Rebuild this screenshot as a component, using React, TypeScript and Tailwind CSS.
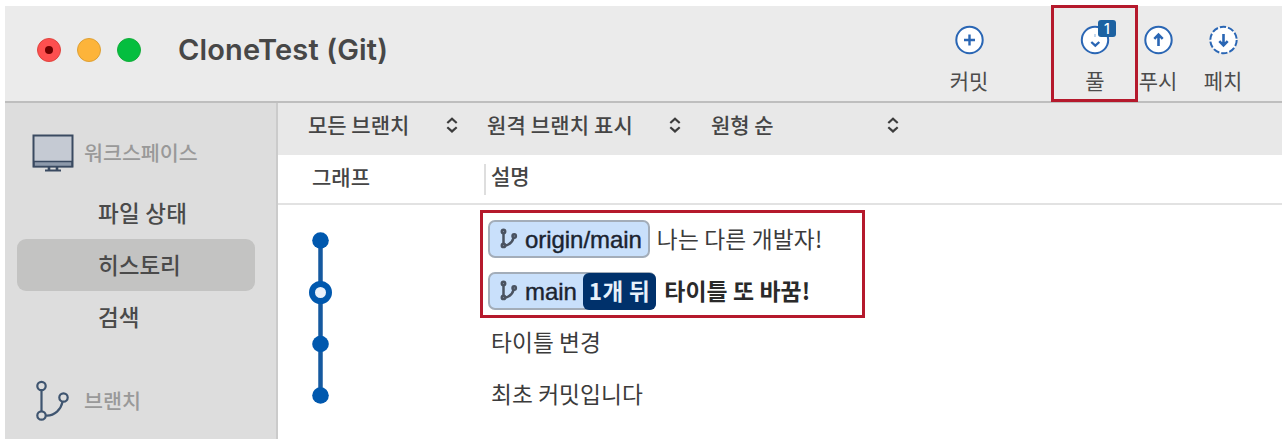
import type { ReactNode } from "react";

const KR = "font-['Noto_Sans_CJK_KR','Noto_Sans_CJK_SC',sans-serif]";

function BranchGlyph({ className }: { className: string }) {
  return (
    <svg className={className} viewBox="0 0 34 42" fill="none" stroke="currentColor">
      <path d="M6.5 10.5v21M11 35.5C20 36 26 29 27.5 22" />
      <circle cx="6.5" cy="6" r="4.2" />
      <circle cx="6.5" cy="35.5" r="4.2" />
      <circle cx="28.5" cy="17.5" r="4.2" />
    </svg>
  );
}

function TagBranch() {
  return (
    <svg
      className="h-[21px] w-[19px] shrink-0 -translate-y-px text-[#4a5361]"
      viewBox="0 0 19 21"
      fill="none"
      stroke="currentColor"
      strokeWidth="2.5"
    >
      <path d="M4.5 4.5v12M5 18C9.5 17.2 13.5 14 14.7 9.5" />
      <circle cx="4.5" cy="3.4" r="1.7" />
      <circle cx="4.5" cy="17.4" r="1.7" />
      <circle cx="15.2" cy="8" r="1.7" />
    </svg>
  );
}

function Sorter() {
  return (
    <svg className="mt-[2px] h-4 w-3 shrink-0" viewBox="0 0 12 16" fill="none" stroke="#3c3c3c" strokeWidth="2.2">
      <path d="M1.3 6 6 1.8l4.7 4.2M1.3 10.2 6 14.4l4.7-4.2" />
    </svg>
  );
}

function Monitor() {
  return (
    <svg className="h-[38px] w-[42px] shrink-0" viewBox="0 0 42 38" fill="none" stroke="#3a4a61" strokeWidth="2">
      <rect x="1.5" y="1.5" width="39" height="31" fill="#c5cad3" />
      <path d="M2 27.5h38v5H2z" fill="#8e9aab" strokeWidth="1.6" />
      <path d="M17 33v3.5M25 33v3.5" strokeWidth="2.6" />
      <path d="M13 36.5h16" />
    </svg>
  );
}

function Tool({ label, className, children }: { label: string; className: string; children: ReactNode }) {
  return (
    <div className={`flex shrink-0 flex-col items-center ${className}`}>
      <svg className="h-8 w-8" viewBox="0 0 32 32" fill="none" stroke="#2a66b4" strokeWidth="2">
        {children}
      </svg>
      <span className="mt-[10px] text-[21px] leading-[28px] whitespace-nowrap text-[#4c4c4c]">{label}</span>
    </div>
  );
}

function Header() {
  return (
    <header className="flex h-[97px] shrink-0 border-b-2 border-[#bebebe] bg-[#ebebeb]">
      <div className="mt-[32px] ml-[32px] flex h-6 items-center gap-4">
        <span className="flex size-6 items-center justify-center rounded-full border border-[#e0443e] bg-[#fd4f4f]">
          <span className="size-2 rounded-full bg-[#6d0000]" />
        </span>
        <span className="size-6 rounded-full border border-[#dea034] bg-[#fdb43a]" />
        <span className="size-6 rounded-full border border-[#14ad3a] bg-[#04be3f]" />
      </div>
      <h1 className="mt-[24px] ml-[37px] grow font-['Inter',sans-serif] text-[29px] leading-[40px] font-semibold tracking-[0.15px] text-[#474747]">
        CloneTest (Git)
      </h1>
      <div className="mr-[24px] flex pt-[18px]">
        <Tool label="커밋" className="w-[66px]">
          <circle cx="16.5" cy="16" r="13.2" fill="#fff" />
          <path d="M16.5 10.5v11M11 16h11" strokeWidth="2.4" />
        </Tool>
        <div className="relative ml-[60px]">
          <Tool label="풀" className="w-[66px]">
            <circle cx="16" cy="16" r="13.2" fill="#fff" />
            <path d="m12.3 18 4 3.7 4-3.7" strokeWidth="2.3" />
            <path d="M16 10v3" stroke="#c4d8ee" />
          </Tool>
          <span className="absolute top-[-4px] left-[36px] flex h-[17px] w-[18px] items-center justify-center rounded-[3px] bg-[#1d62a2] font-['Inter',sans-serif] text-[14px] leading-none font-medium text-white">
            1
          </span>
          <div className="absolute top-[-19px] left-[-11px] h-[97px] w-[87px] border-[3px] border-[#b5192c]" />
        </div>
        <Tool label="푸시" className="w-[60px]">
          <circle cx="16.5" cy="16" r="13.2" fill="#fff" />
          <path d="M16.5 22V11M12.3 14.8l4.2-4.2 4.2 4.2" strokeWidth="2.6" />
        </Tool>
        <Tool label="페치" className="w-[70px]">
          <circle cx="16.5" cy="16" r="13.2" fill="#fff" strokeDasharray="6.3 2" />
          <path d="M16.5 10v11M12.3 17.2l4.2 4.2 4.2-4.2" strokeWidth="2.6" />
        </Tool>
      </div>
    </header>
  );
}

function Sidebar() {
  return (
    <nav className="w-[273px] shrink-0 border-r-2 border-[#cbcbcb] bg-[#dddddd] text-[22.5px] leading-[50px] font-medium text-[#4a4a4a]">
      <div className="flex h-[84px] pt-[31px] pl-[27px]">
        <Monitor />
        <span className="ml-[10px] text-[20.6px] leading-[36px] text-[#999]">워크스페이스</span>
      </div>
      <div className="h-[52px] pl-[93px] tracking-[0.3px]">파일 상태</div>
      <div className="mx-3 mr-[21px] h-[52px] rounded-[9px] bg-[#c3c3c2] pl-[81px]">히스토리</div>
      <div className="h-[52px] pl-[93px]">검색</div>
      <div className="flex pt-[37px] pl-[30px]">
        <BranchGlyph className="h-[42px] w-[34px] shrink-0 stroke-[2.2] text-[#3f5570]" />
        <span className="ml-[15px] text-[20.6px] leading-[40px] text-[#999]">브랜치</span>
      </div>
    </nav>
  );
}

function Graph() {
  return (
    <svg className="h-[218px] w-[203px] shrink-0" viewBox="0 0 203 218" fill="#0058ae">
      <path d="M42.5 36v155" stroke="#15599f" strokeWidth="4.5" />
      <circle cx="42.5" cy="35.5" r="8.3" />
      <circle cx="42.5" cy="139" r="8.3" />
      <circle cx="42.5" cy="190.5" r="8.3" />
      <circle cx="42.5" cy="87.5" r="8.5" fill="#e9f1fb" stroke="#0058ae" strokeWidth="6" />
    </svg>
  );
}

function Tag({ name, badge }: { name: string; badge?: string }) {
  return (
    <span className="flex h-[38px] shrink-0 items-center rounded-[7px] border-2 border-[#a3adb9] bg-[#c9e0fb] pl-[9px] text-[#1b2430]">
      <TagBranch />
      <span className="ml-[7px] pt-[2px] font-['Liberation_Sans',sans-serif] text-[24px] leading-[36px] tracking-[-0.05px] [-webkit-text-stroke:0.4px_#1b2430]">
        {name}
      </span>
      {badge ? (
        <span className="-my-px -mr-[2px] ml-[6px] h-[37px] rounded-[6px] bg-[#00316b] px-[6px] text-[22.5px] leading-[35px] font-bold tracking-[0.4px] whitespace-nowrap text-[#e8f1fb]">
          {badge}
        </span>
      ) : (
        <span className="w-[6px]" />
      )}
    </span>
  );
}

function History() {
  return (
    <div className="flex">
      <Graph />
      <div className="w-[400px] text-[22.7px] leading-[50px] tracking-[0.1px] whitespace-nowrap text-[#3b3b3b]">
        <div className="mt-[5px] -ml-px h-[108px] w-[385px] border-[3px] border-[#b5192c]">
          <div className="-mt-px flex h-[52px] items-center pt-[2px] pl-[5px]">
            <Tag name="origin/main" />
            <span className="ml-[7px] h-[50px] tracking-[0.2px]">나는 다른 개발자!</span>
          </div>
          <div className="flex h-[52px] items-center pt-[2px] pl-[5px]">
            <Tag name="main" badge="1개 뒤" />
            <span className="ml-[8px] h-[52px] text-[22.9px] font-bold text-[#2a2a2a]">타이틀 또 바꿈!</span>
          </div>
        </div>
        <div className="-mt-px h-[52px] pl-[10px]">타이틀 변경</div>
        <div className="h-[52px] pl-[10px]">최초 커밋입니다</div>
      </div>
    </div>
  );
}

export default function App() {
  return (
    <div className={`h-[443px] w-[1287px] overflow-hidden bg-white pt-[6px] pl-[5px] ${KR}`}>
      <div className="flex h-[433px] w-[1277px] flex-col">
        <Header />
        <div className="flex min-h-0 grow">
          <Sidebar />
          <main className="flex grow flex-col">
            <div className="flex h-[52px] items-center bg-[#e8e8e8] pb-[10px] text-[21px] leading-[30px] font-medium whitespace-nowrap text-[#454545]">
              <div className="flex w-[178px] items-center pl-[30px]">
                <span className="w-[138px] shrink-0">모든 브랜치</span>
                <Sorter />
              </div>
              <div className="flex w-[225px] items-center pl-[31px]">
                <span className="w-[182px] shrink-0 tracking-[0.15px]">원격 브랜치 표시</span>
                <Sorter />
              </div>
              <div className="flex items-center pl-[30px]">
                <span className="w-[176px] shrink-0">원형 순</span>
                <Sorter />
              </div>
            </div>
            <div className="flex h-[50px] items-center border-b-2 border-[#e2e2e2] pb-[7px] text-[21px] leading-[30px] font-medium text-[#454545]">
              <span className="w-[206px] pl-[34px]">그래프</span>
              <span className="mt-[8px] h-[31px] border-l-2 border-[#dedede] pl-[5px] leading-[22px]">설명</span>
            </div>
            <History />
          </main>
        </div>
      </div>
    </div>
  );
}
